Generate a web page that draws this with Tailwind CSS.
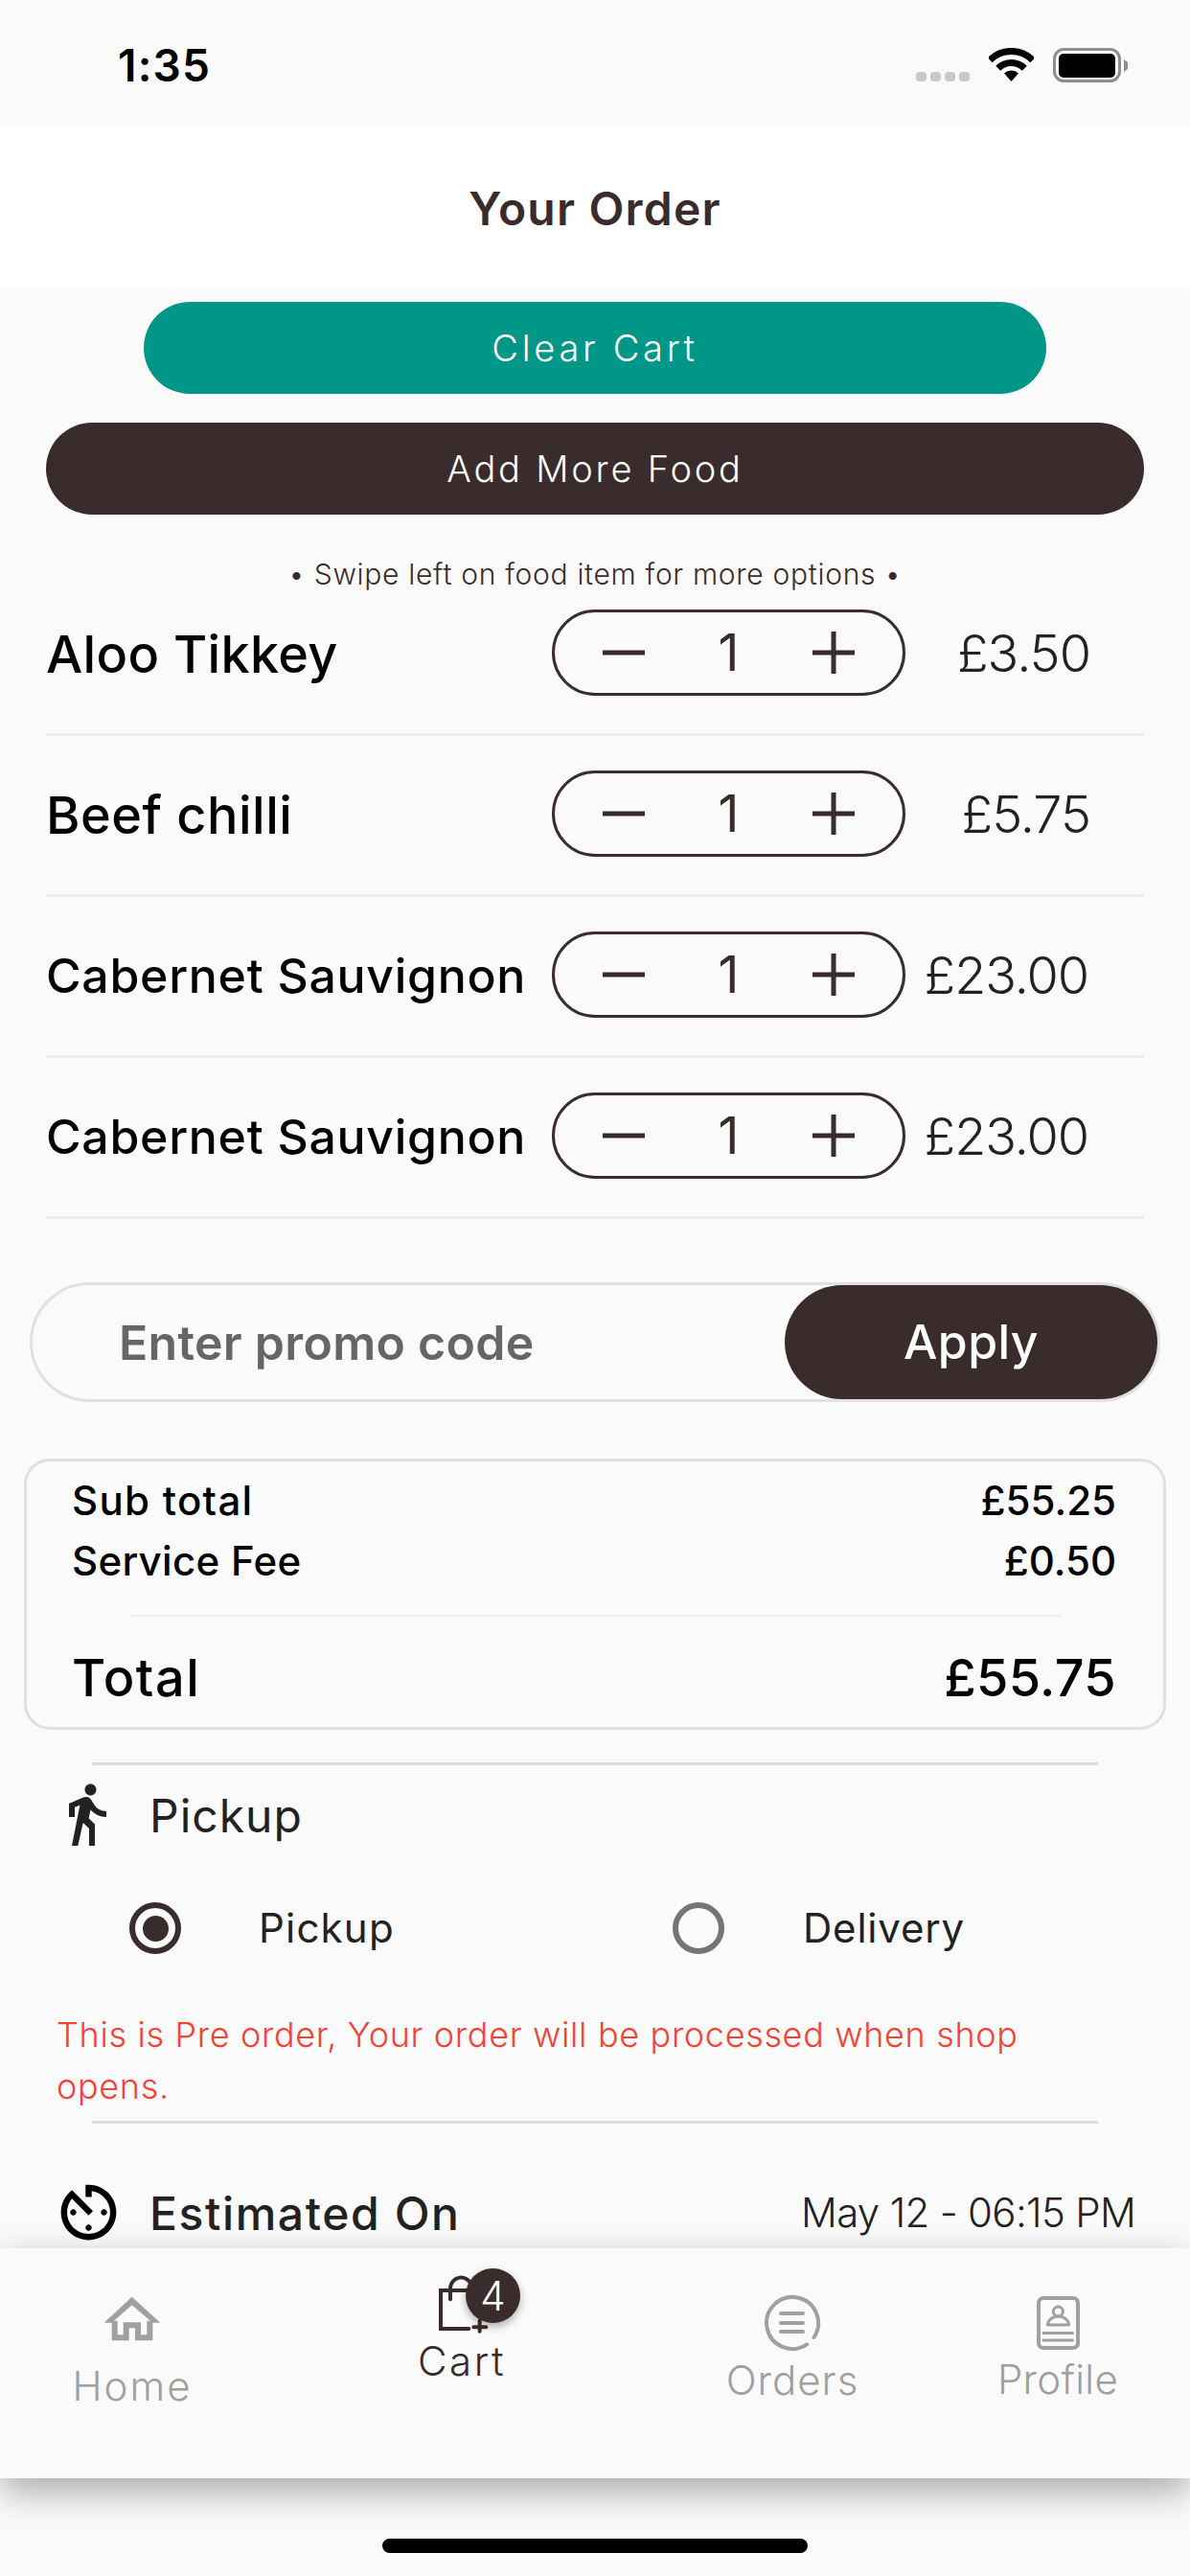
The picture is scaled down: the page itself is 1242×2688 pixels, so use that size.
<!DOCTYPE html>
<html lang="en">
<head>
<meta charset="utf-8">
<title>Your Order</title>
<script src="https://cdn.jsdelivr.net/npm/@tailwindcss/browser@4"></script>
</head>
<body class="relative flex h-[2688px] w-[1242px] flex-col overflow-hidden bg-[#fafafa] font-['Inter',sans-serif] text-[#222]">
  <!-- status bar -->
  <div class="flex h-[132px] shrink-0 items-center justify-between pl-[123px] pr-[63px]">
    <span class="pt-[3px] text-[46px] font-semibold leading-none tracking-[1.2px] text-black">1:35</span>
    <div class="flex items-start gap-[20px] pt-[6px]">
      <div class="mt-[25px] flex gap-[4px]">
        <span class="h-[10px] w-[11px] rounded-[4px] bg-[#c8c8c8]"></span>
        <span class="h-[10px] w-[11px] rounded-[4px] bg-[#c8c8c8]"></span>
        <span class="h-[10px] w-[11px] rounded-[4px] bg-[#c8c8c8]"></span>
        <span class="h-[10px] w-[11px] rounded-[4px] bg-[#c8c8c8]"></span>
      </div>
      <svg width="47" height="36" viewBox="0 0 47 36" fill="none" stroke="#000" stroke-width="7">
        <path d="M1.2 12.7A31.5 31.5 0 0 1 45.8 12.7"/>
        <path d="M9.7 21.2A19.5 19.5 0 0 1 37.3 21.2"/>
        <path d="M23.5 35L16 26.5A11 11 0 0 1 31 26.5Z" fill="#000" stroke="none"/>
      </svg>
      <svg width="80" height="38" viewBox="0 0 80 38" fill="none">
        <rect x="1.5" y="1.5" width="68" height="33" rx="10" stroke="#8e8e8e" stroke-width="3"/>
        <rect x="6" y="6" width="59" height="25" rx="5" fill="#000"/>
        <path d="M74 12L78 15V22L74 25Z" fill="#8e8e8e"/>
      </svg>
    </div>
  </div>

  <!-- header -->
  <header class="flex h-[168px] shrink-0 items-center justify-center bg-white">
    <h1 class="pt-[3px] text-[48px] font-semibold leading-none tracking-[1.2px] text-[#3a2c2c]">Your Order</h1>
  </header>

  <!-- content -->
  <main class="min-h-0 flex-1 overflow-hidden">
    <button class="mx-auto mt-[15px] flex h-[96px] w-[942px] items-center justify-center rounded-full bg-[#009688] text-[38px] font-light tracking-[3.7px] text-white">Clear Cart</button>
    <button class="mx-auto mt-[30px] flex h-[96px] w-[1146px] items-center justify-center rounded-full bg-[#3a2c2c] text-[38px] font-light tracking-[2.8px] text-white">Add More Food</button>
    <p class="mt-[44px] h-[36px] text-center text-[30px] font-light leading-[36px] tracking-[0.7px] text-[#3a2c2c]">• Swipe left on food item for more options •</p>

    <ul class="mx-[48px]">
      <li class="flex items-center border-b-[3px] border-[#eeeeee] pb-[39px] pt-[19px]">
        <span class="w-[528px] pt-[3px] text-[54px] font-medium leading-none tracking-[0.3px] text-black">Aloo Tikkey</span>
        <div class="flex h-[90px] w-[369px] items-center justify-between rounded-full border-[3px] border-[#3a2c2c] px-[50px]">
          <svg width="44" height="44" viewBox="0 0 44 44" stroke="#3a2c2c" stroke-width="5"><path d="M0 22H44"/></svg>
          <span class="text-[54px] font-normal leading-none text-[#3a2c2c]">1</span>
          <svg width="44" height="44" viewBox="0 0 44 44" stroke="#3a2c2c" stroke-width="5"><path d="M0 22H44M22 0V44"/></svg>
        </div>
        <span class="w-[193px] pt-[2px] text-right text-[54px] font-light leading-none tracking-[-1px]">£3.50</span>
      </li>
      <li class="flex items-center border-b-[3px] border-[#eeeeee] pb-[39px] pt-[36px]">
        <span class="w-[528px] pt-[3px] text-[54px] font-medium leading-none tracking-[0.5px] text-black">Beef chilli</span>
        <div class="flex h-[90px] w-[369px] items-center justify-between rounded-full border-[3px] border-[#3a2c2c] px-[50px]">
          <svg width="44" height="44" viewBox="0 0 44 44" stroke="#3a2c2c" stroke-width="5"><path d="M0 22H44"/></svg>
          <span class="text-[54px] font-normal leading-none text-[#3a2c2c]">1</span>
          <svg width="44" height="44" viewBox="0 0 44 44" stroke="#3a2c2c" stroke-width="5"><path d="M0 22H44M22 0V44"/></svg>
        </div>
        <span class="w-[193px] pt-[2px] text-right text-[54px] font-light leading-none tracking-[-1px]">£5.75</span>
      </li>
      <li class="flex items-center border-b-[3px] border-[#eeeeee] pb-[39px] pt-[36px]">
        <span class="w-[528px] pt-[2px] text-[50px] font-medium leading-none tracking-[0.7px] text-black">Cabernet Sauvignon</span>
        <div class="flex h-[90px] w-[369px] items-center justify-between rounded-full border-[3px] border-[#3a2c2c] px-[50px]">
          <svg width="44" height="44" viewBox="0 0 44 44" stroke="#3a2c2c" stroke-width="5"><path d="M0 22H44"/></svg>
          <span class="text-[54px] font-normal leading-none text-[#3a2c2c]">1</span>
          <svg width="44" height="44" viewBox="0 0 44 44" stroke="#3a2c2c" stroke-width="5"><path d="M0 22H44M22 0V44"/></svg>
        </div>
        <span class="w-[191px] pt-[2px] text-right text-[54px] font-light leading-none tracking-[-1.1px]">£23.00</span>
      </li>
      <li class="flex items-center border-b-[3px] border-[#eeeeee] pb-[39px] pt-[36px]">
        <span class="w-[528px] pt-[2px] text-[50px] font-medium leading-none tracking-[0.7px] text-black">Cabernet Sauvignon</span>
        <div class="flex h-[90px] w-[369px] items-center justify-between rounded-full border-[3px] border-[#3a2c2c] px-[50px]">
          <svg width="44" height="44" viewBox="0 0 44 44" stroke="#3a2c2c" stroke-width="5"><path d="M0 22H44"/></svg>
          <span class="text-[54px] font-normal leading-none text-[#3a2c2c]">1</span>
          <svg width="44" height="44" viewBox="0 0 44 44" stroke="#3a2c2c" stroke-width="5"><path d="M0 22H44M22 0V44"/></svg>
        </div>
        <span class="w-[191px] pt-[2px] text-right text-[54px] font-light leading-none tracking-[-1.1px]">£23.00</span>
      </li>
    </ul>

    <!-- promo -->
    <div class="mx-[31px] mt-[66px] flex h-[125px] items-center justify-between rounded-full border-[3px] border-[#e0e0e0] pl-[90px]">
      <span class="text-[50px] font-semibold leading-none tracking-[0.3px] text-[#666]">Enter promo code</span>
      <button class="flex h-full w-[389px] items-center justify-center rounded-full bg-[#3a2c2c] text-[50px] font-medium tracking-[0.4px] text-white">Apply</button>
    </div>

    <!-- totals -->
    <section class="mx-[25px] mt-[59px] h-[283px] rounded-[27px] border-[3px] border-[#e0e0e0] pl-[47px] pr-[49px] pt-[9px]">
      <div class="flex h-[63px] items-center justify-between text-[42px] font-medium text-black"><span class="tracking-[1.3px]">Sub total</span><span>£55.25</span></div>
      <div class="flex h-[63px] items-center justify-between text-[42px] font-medium text-black"><span class="tracking-[0.3px]">Service Fee</span><span>£0.50</span></div>
      <div class="ml-[60px] mr-[58px] mt-[25px] h-[2px] bg-[#eeeeee]"></div>
      <div class="mt-[23px] flex h-[80px] items-center justify-between text-[54px] font-medium text-black"><span class="tracking-[1.6px]">Total</span><span class="tracking-[0.3px]">£55.75</span></div>
    </section>

    <!-- pickup -->
    <div class="mx-[96px] mt-[34px] h-[3px] bg-[#dddddd]"></div>
    <div class="mt-[15px] flex h-[72px] items-center gap-[30px] pl-[54px]">
      <svg width="72" height="72" viewBox="0 0 24 24" fill="#222"><path d="M13.5 5.5c1.1 0 2-.9 2-2s-.9-2-2-2-2 .9-2 2 .9 2 2 2zM9.8 8.9L7 23h2.1l1.8-8 2.1 2v6h2v-7.5l-2.1-2 .6-3C14.8 12 16.8 13 19 13v-2c-1.9 0-3.5-1-4.3-2.4l-1-1.6c-.4-.6-1-1-1.7-1-.3 0-.5.1-.8.1L6 8.3V13h2V9.6l1.8-.7"/></svg>
      <span class="pt-[3px] text-[48px] font-normal leading-none tracking-[1px]">Pickup</span>
    </div>
    <div class="mt-[56px] flex h-[54px] items-center pl-[135px]">
      <label class="flex w-[567px] items-center gap-[81px]">
        <span class="flex h-[54px] w-[54px] items-center justify-center rounded-full border-[6px] border-[#3a2c2c]"><span class="h-[27px] w-[27px] rounded-full bg-[#3a2c2c]"></span></span>
        <span class="text-[42px] font-normal leading-none tracking-[1.2px]">Pickup</span>
      </label>
      <label class="flex items-center gap-[82px]">
        <span class="h-[54px] w-[54px] rounded-full border-[6px] border-[#757575]"></span>
        <span class="text-[42px] font-normal leading-none tracking-[0.8px]">Delivery</span>
      </label>
    </div>
    <p class="mt-[57px] w-[1100px] pl-[59px] text-[36px] font-light leading-[54px] tracking-[0.65px] text-[#f44336]">This is Pre order, Your order will be processed when shop opens.</p>
    <div class="mx-[96px] mt-[9px] h-[3px] bg-[#dddddd]"></div>
    <div class="mt-[54px] flex h-[77px] items-center justify-between pl-[54px] pr-[57px]">
      <div class="flex items-center gap-[25px]">
        <svg width="77" height="77" viewBox="0 0 24 24" fill="#000"><path d="M11 17c0 .55.45 1 1 1s1-.45 1-1-.45-1-1-1-1 .45-1 1zm0-14v4h2V5.08c3.39.49 6 3.39 6 6.92 0 3.87-3.13 7-7 7s-7-3.13-7-7c0-1.68.59-3.22 1.58-4.42L12 13l1.41-1.41-6.8-6.8v.02C4.42 6.45 3 9.05 3 12c0 4.97 4.02 9 9 9 4.97 0 9-4.03 9-9s-4.03-9-9-9h-1zm7 9c0-.55-.45-1-1-1s-1 .45-1 1 .45 1 1 1 1-.45 1-1zM6 12c0 .55.45 1 1 1s1-.45 1-1-.45-1-1-1-1 .45-1 1z"/></svg>
        <span class="pt-[3px] text-[48px] font-medium leading-none tracking-[1.6px]">Estimated On</span>
      </div>
      <span class="text-[42px] font-light leading-none tracking-[-0.7px]">May 12 - 06:15 PM</span>
    </div>
  </main>

  <!-- bottom nav -->
  <nav class="relative z-10 flex h-[240px] shrink-0 items-start bg-[#fafafa] shadow-[0_14px_36px_rgba(0,0,0,0.32)]">
    <a class="flex w-[276px] flex-col items-center pt-[44px] text-[#a0a0a0]">
      <svg width="76" height="64" viewBox="0 0 228 192" fill="#a0a0a0">
        <polygon points="113,20 202,101 178,101 113,46 50,101 26,101"/>
        <polyline points="59,95 59,148 95,148 95,109 132,109 132,148 169,148 169,95" fill="none" stroke="#a0a0a0" stroke-width="18"/>
      </svg>
      <span class="mt-[15px] text-[42px] font-light leading-none tracking-[2px]">Home</span>
    </a>
    <a class="flex w-[412px] flex-col items-center pt-[14px] text-[#3a2c2c]">
      <span class="relative ml-[36px] block h-[80px] w-[100px]">
        <svg width="100" height="80" viewBox="0 0 300 240" fill="none" stroke="#3a2c2c" stroke-width="12" stroke-linecap="round" class="absolute left-0 top-0">
          <path d="M118 210H30V90H170"/>
          <path d="M60 118V80A34 34 0 0 1 125 70"/>
          <path d="M133 205H172M152 185V218"/>
        </svg>
        <span class="absolute left-[36px] top-[7px] flex h-[57px] w-[57px] items-center justify-center rounded-full bg-[#3a2c2c] text-[42px] font-light leading-none text-white shadow-[0_4px_8px_rgba(0,0,0,0.3)]">4</span>
      </span>
      <span class="mt-[3px] text-[42px] font-light leading-none tracking-[2.5px]">Cart</span>
    </a>
    <a class="flex w-[278px] flex-col items-center pt-[48px] text-[#a0a0a0]">
      <svg width="60" height="60" viewBox="0 0 60 60" fill="none" stroke="#a0a0a0" stroke-width="4" stroke-linecap="round">
        <path d="M45.1 52.4A27 27 0 1 1 52.5 45"/>
        <path d="M18 20H41M18 30H41M18 39H41"/>
      </svg>
      <span class="mt-[9px] text-[42px] font-light leading-none tracking-[1px]">Orders</span>
    </a>
    <a class="flex w-[276px] flex-col items-center pt-[50px] text-[#a0a0a0]">
      <svg width="45" height="56" viewBox="0 0 45 56" fill="none" stroke="#a0a0a0" stroke-width="4" stroke-linecap="round">
        <rect x="2" y="2" width="41" height="52" rx="5"/>
        <circle cx="22.4" cy="16" r="5" stroke-width="3"/>
        <path d="M11.5 30A11 9 0 0 1 33.5 30Z" stroke-width="3" stroke-linejoin="round"/>
        <path d="M7 38.5H37.5M7 46H37.5" stroke-width="3"/>
      </svg>
      <span class="mt-[10px] text-[42px] font-light leading-none tracking-[0.3px]">Profile</span>
    </a>
  </nav>

  <!-- home indicator -->
  <footer class="flex h-[102px] shrink-0 justify-center pt-[63px]">
    <span class="h-[15px] w-[444px] rounded-full bg-black"></span>
  </footer>
</body>
</html>
